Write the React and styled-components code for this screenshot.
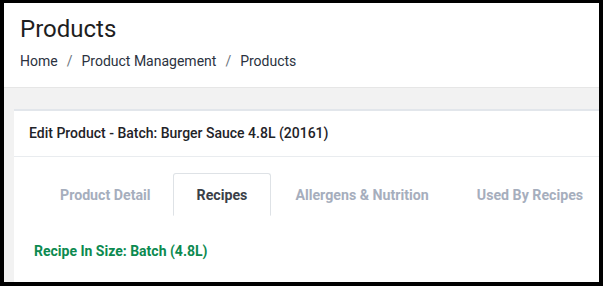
import React from "react";
import styled, { createGlobalStyle } from "styled-components";

const Global = createGlobalStyle`
  html, body { margin: 0; padding: 0; background: #000; }
  body { font-family: Roboto, "Liberation Sans", sans-serif; }
  #root { padding: 3px 4px 4px 4px; }
`;

const Page = styled.div`
  width: 595px;
  height: 279px;
  background: #f2f2f2;
  overflow: hidden;
  display: flex;
  flex-direction: column;
`;

const Header = styled.header`
  background: #fff;
  height: 85px;
  border-bottom: 1px solid #e6e6e6;
  padding: 11px 16px 0;
  box-sizing: border-box;
  flex-shrink: 0;
`;

const Title = styled.h1`
  margin: 0;
  font-size: 24px;
  font-weight: 400;
  line-height: 30px;
  color: #1e1e1e;
`;

const Crumbs = styled.nav`
  display: flex;
  align-items: center;
  margin-top: 7px;
  font-size: 14px;
  line-height: 20px;
  color: #2b3240;
`;

const Sep = styled.span`
  color: #6c757d;
  padding: 0 9px;
`;

const Content = styled.main`
  padding: 21px 0 0 10px;
  flex: 1;
`;

const Card = styled.section`
  width: 640px;
  background: #fff;
  border-top: 2px solid #e2e6eb;
  height: 100%;
`;

const CardHeader = styled.div`
  height: 46px;
  box-sizing: border-box;
  display: flex;
  align-items: center;
  padding: 0 15px 1px;
  border-bottom: 1px solid #e9ecef;
  font-size: 14px;
  font-weight: 500;
  color: #1f2328;
`;

const CardBody = styled.div`
  padding: 16px 20px;
`;

const Tabs = styled.ul`
  display: flex;
  list-style: none;
  margin: 0;
  padding: 0;
  border-bottom: 1px solid #dee2e6;
`;

const Tab = styled.li`
  height: 43px;
  box-sizing: border-box;
  display: flex;
  align-items: center;
  padding: ${(p) => (p.$first ? "0 21px 0 25px" : "0 23px")};
  margin-bottom: -1px;
  font-size: 14.2px;
  font-weight: 700;
  white-space: nowrap;
  color: ${(p) => (p.$active ? "#3a3f48" : "#a6aebd")};
  background: #fff;
  border: 1px solid ${(p) => (p.$active ? "#dee2e6" : "transparent")};
  border-bottom-color: ${(p) => (p.$active ? "#fff" : "transparent")};
  border-radius: 3px 3px 0 0;
`;

const SizeNote = styled.div`
  margin-top: 27px;
  font-size: 14px;
  font-weight: 700;
  line-height: 17px;
  color: #0c8a50;
`;

export default function App() {
  const tabs = ["Product Detail", "Recipes", "Allergens & Nutrition", "Used By Recipes"];
  return (
    <>
      <Global />
      <Page>
        <Header>
          <Title>Products</Title>
          <Crumbs>
            <span>Home</span>
            <Sep>/</Sep>
            <span>Product Management</span>
            <Sep>/</Sep>
            <span>Products</span>
          </Crumbs>
        </Header>
        <Content>
          <Card>
            <CardHeader>Edit Product - Batch: Burger Sauce 4.8L (20161)</CardHeader>
            <CardBody>
              <Tabs>
                {tabs.map((t, i) => (
                  <Tab key={t} $first={i === 0} $active={t === "Recipes"}>
                    {t}
                  </Tab>
                ))}
              </Tabs>
              <SizeNote>Recipe In Size: Batch (4.8L)</SizeNote>
            </CardBody>
          </Card>
        </Content>
      </Page>
    </>
  );
}
